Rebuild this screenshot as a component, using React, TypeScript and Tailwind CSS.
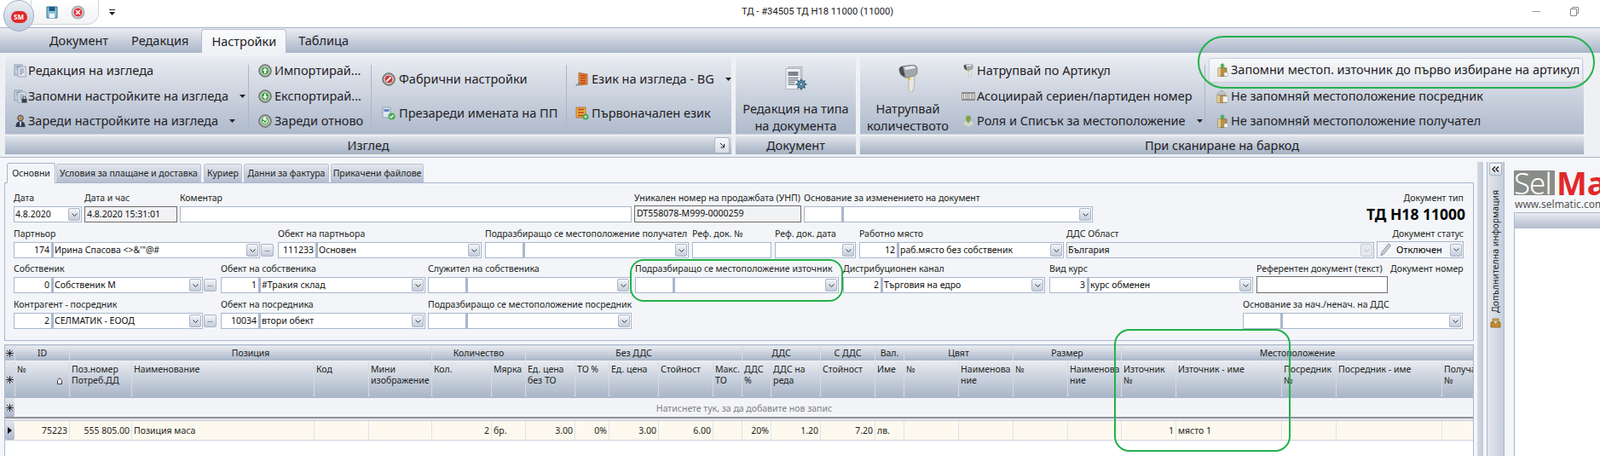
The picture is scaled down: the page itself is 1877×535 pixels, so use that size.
import React from "react";

const F = "[font-family:'Liberation_Sans',Arial,sans-serif]";
const FORM = "[font-family:Roboto,'Liberation_Sans',sans-serif] text-[10.5px]";

function Caret({ cls = "" }: { cls?: string }) {
  return <svg width="7" height="4" viewBox="0 0 7 4" className={`shrink-0 ${cls}`}><path d="M0 0h7L3.500 4z" fill="#222" /></svg>;
}

function Scanner({ w, h }: { w: number; h: number }) {
  return (
    <svg width={w} height={h} viewBox="0 0 23 32" className="shrink-0">
      <path d="M11 13l7-2c1.500 6 .5 14-.5 18l-1 3h-3l-1.500-3c0-5 0-11-1-16z" fill="#e9e7dd" stroke="#a7a59c" strokeWidth=".8" />
      <path d="M10.500 15.500l3-1 .5 3-2.500 1z" fill="#e2b93b" />
      <path d="M1 5C1 3 3 2 6 1.500L16 .3c3 0 6 1 6 4v5c0 2-2 3-4 4l-9 2C4 14 1 10 1 5z" fill="#a4a7ab" stroke="#6f7276" strokeWidth=".7" />
      <path d="M7 3l9-1.500c2 0 4 .8 4 2.500l-12 2z" fill="#eceded" />
      <path d="M1 5c0-2 2-3 4-3 1 3 2 8 3 12C4 14 1 10 1 5z" fill="#4b4d50" />
    </svg>
  );
}

function Ico({ kind, s = 16 }: { kind: string; s?: number }) {
  const c = (fill: string, inner: React.ReactNode) => (
    <svg width={s} height={s} viewBox="0 0 16 16" className="shrink-0">
      <circle cx="8" cy="8" r="7.300" fill="#8a9088" stroke="#6d716c" />
      <circle cx="8" cy="8" r="5" fill={fill} stroke="#f1f1f1" strokeWidth="1" />
      {inner}
    </svg>
  );
  if (kind === "up") return c("#45a34a", <path d="M8 4.500 11 8H9v3H7V8H5z" fill="#fff" />);
  if (kind === "down") return c("#45a34a", <path d="M8 11.500 5 8h2V5h2v3h2z" fill="#fff" />);
  if (kind === "reload") return c("#45a34a", <path d="M5.500 8a2.500 2.500 0 1 0 2.500-2.500M8 4v3L6 5.500z" fill="none" stroke="#fff" strokeWidth="1.200" />);
  if (kind === "factory") return c("#c9303a", <path d="M5.500 10.500 10.500 5.500" stroke="#fff" strokeWidth="2" />);
  if (kind === "docs" || kind === "docslock")
    return (
      <svg width={s} height={s} viewBox="0 0 16 16" className="shrink-0">
        <rect x="1" y="1" width="9" height="12" fill="#c5d0df" stroke="#8e9bb0" />
        <rect x="5" y="3" width="9" height="12" fill="#e4e9f1" stroke="#98a6ba" />
        <path d="M3 3.500h5M3 6h1.500M7 6h5M7 8h5M7 10h5M7 12h3" stroke="#7b8ca6" />
        {kind === "docslock" && (
          <g>
            <rect x="9.500" y="11" width="6" height="4.500" fill="#3a3f47" />
            <path d="M11 11V9.500a1.500 1.500 0 0 1 3 0V11" fill="none" stroke="#3a3f47" />
          </g>
        )}
      </svg>
    );
  if (kind === "user")
    return (
      <svg width={s} height={s} viewBox="0 0 16 16" className="shrink-0">
        <circle cx="8" cy="4.500" r="3.300" fill="#b98d6e" stroke="#4a4a4a" />
        <path d="M2.500 15c0-5 2-6.500 5.500-6.500S13.500 10 13.500 15z" fill="#2f3b52" />
        <path d="M7 9h2l-.5 5h-1z" fill="#e8e8e8" />
      </svg>
    );
  if (kind === "reloadnames")
    return (
      <svg width={s} height={s} viewBox="0 0 16 16" className="shrink-0">
        <rect x="1" y="1" width="9" height="12" fill="#dfe6f1" stroke="#93a0b5" />
        <rect x="2.500" y="3" width="6" height="3" fill="#5d8ac9" />
        <circle cx="11.500" cy="11.500" r="4" fill="#4aa84f" />
        <path d="M9.500 11.500 11 13l2.500-3" stroke="#fff" fill="none" strokeWidth="1.200" />
      </svg>
    );
  if (kind === "lang")
    return (
      <svg width={s} height={s} viewBox="0 0 16 16" className="shrink-0">
        <path d="M4 .500 14 2v12L4 15z" fill="#dd8a2e" stroke="#a4521d" strokeWidth=".7" />
        <path d="M6 3.500l6 .5M6 6.500l6 .3M6 9.500l6 .1M6 12.500l6-.2" stroke="#c8342c" strokeWidth="1.300" />
        <path d="M.5 15c2 0 3-1 4-3" stroke="#5b7fb5" fill="none" strokeWidth="1.300" />
      </svg>
    );
  if (kind === "lang2")
    return (
      <svg width={s} height={s} viewBox="0 0 16 16" className="shrink-0">
        <rect x="1" y="1" width="11" height="12" fill="#e8b53a" stroke="#a4521d" strokeWidth=".7" />
        <path d="M3 3.500h7M3 7h7M3 10.500h7" stroke="#c8342c" strokeWidth="1.600" />
        <circle cx="12" cy="12" r="3.500" fill="#4aa84f" />
        <path d="M10.500 12h3M12 10.500v3" stroke="#fff" />
      </svg>
    );
  if (kind === "barcode")
    return (
      <svg width={s} height={s} viewBox="0 0 16 16" className="shrink-0">
        <rect x="0" y="3" width="16" height="10" fill="#8b8b8b" />
        <path d="M1.500 5v6M3.500 5v6M5 5v6M7 5v6M9 5v6M10.500 5v6M12.500 5v6M14.500 5v6" stroke="#eee" />
      </svg>
    );
  if (kind === "pin")
    return (
      <svg width={s} height={s} viewBox="0 0 16 16" className="shrink-0">
        <path d="M0 11l8-5 8 5-8 4.500z" fill="#d3d7ce" stroke="#a6aaa2" strokeWidth=".5" />
        <path d="M8 11C5 7 5 5.500 5 4.500a3 3 0 0 1 6 0C11 5.500 11 7 8 11z" fill="#7fa64a" />
      </svg>
    );
  if (kind === "bag")
    return (
      <svg width={s} height={s} viewBox="0 0 16 16" className="shrink-0">
        <path d="M3 6 8 4.500 13 6v9.500H3z" fill="#b68f48" stroke="#7b5f2b" strokeWidth=".7" />
        <path d="M3 6l3-.8v10.300H3z" fill="#e2c98c" />
        <path d="M8 0l3 3H9.500v3h-3V3H5z" fill="#4aa84f" />
        <rect x="10" y="11" width="4.500" height="4.500" fill="#f3f3f3" stroke="#9a9a9a" strokeWidth=".5" />
      </svg>
    );
  if (kind === "bag2")
    return (
      <svg width={s} height={s} viewBox="0 0 16 16" className="shrink-0">
        <path d="M2 5l5-4 4 3v3H2z" fill="#c3c3c3" stroke="#8d8d8d" strokeWidth=".6" />
        <path d="M2 7h11v8.500H2z" fill="#bb9650" stroke="#7b5f2b" strokeWidth=".6" />
        <path d="M2 7h3v8.500H2z" fill="#e2c98c" />
        <rect x="8.500" y="8" width="6" height="7" fill="#f3f3f3" stroke="#9a9a9a" strokeWidth=".5" />
      </svg>
    );
  return null;
}

function Item({ icon, text, caret, cls = "", gap = "gap-[1px]" }: { icon: string; text: string; caret?: string; cls?: string; gap?: string }) {
  return (
    <div className={`flex items-center text-[14.5px] text-[#1f2226] whitespace-nowrap ${gap} ${cls}`}>
      {icon === "scan" ? <span className="w-[16px] flex justify-center"><Scanner w={12} h={16} /></span> : <Ico kind={icon} />}
      <span>{text}</span>
      {caret && <Caret cls={caret} />}
    </div>
  );
}

function Sep() {
  return <div className="w-px h-[73px] bg-[#aab6c8] mt-[10px] shrink-0" />;
}

function Group({ w, caption, children, launcher }: { w: string; caption: string; children: React.ReactNode; launcher?: boolean }) {
  return (
    <div className={`flex flex-col shrink-0 ${w}`}>
      <div className="h-[93px] flex bg-linear-to-b from-[#e9ecf1] to-[#afbacc] border border-[#f1f3f6] rounded-t-[2px] border-b-[#cdd5e1]">{children}</div>
      <div className="relative mt-[1px] h-[23px] flex items-center justify-center text-[14.5px] text-[#1f2226] bg-linear-to-b from-[#e0e4ea] to-[#a3afc3] border border-[#e9ecf1]">
        {caption}
        {launcher && (
          <div className="absolute right-[2px] top-[1px] w-[18px] h-[19px] rounded-[3px] bg-linear-to-b from-[#f8f9fb] to-[#d6dbe4] border border-[#a9b5c8] flex items-center justify-center">
            <svg width="7" height="7" viewBox="0 0 7 7"><path d="M1 1l4 4M5.500 2v4h-4" stroke="#222" fill="none" /></svg>
          </div>
        )}
      </div>
    </div>
  );
}

function Chev({ disabled }: { disabled?: boolean }) {
  return (
    <span className={`shrink-0 w-[14px] h-[15px] rounded-[2px] border flex items-center justify-center ${disabled ? "border-[#c4ccd8] bg-[#e6e9ee]" : "border-[#a9b5c8] bg-linear-to-b from-[#f3f5f8] to-[#c5cdda]"}`}>
      <svg width="7" height="4" viewBox="0 0 7 4"><path d="M.5.500 3.500 3.500 6.500.500" fill="none" stroke={disabled ? "#aab2bf" : "#30353d"} /></svg>
    </span>
  );
}

function Dots() {
  return (
    <span className="shrink-0 ml-[1px] w-[15px] h-[15px] self-center rounded-[2px] border border-[#a9b5c8] bg-linear-to-b from-[#f3f5f8] to-[#c5cdda] flex items-center justify-center text-[8px] leading-none text-[#333] pb-[3px]">...</span>
  );
}

function Field({ w, label, right, children }: { w: string; label: string; right?: boolean; children?: React.ReactNode }) {
  return (
    <div className={`shrink-0 flex flex-col ${w}`}>
      <div className={`h-[17px] leading-[15px] text-[#1d1f22] whitespace-nowrap ${right ? "text-right" : ""}`}>{label}</div>
      {children}
    </div>
  );
}

function Combo({ num, text, dots, numW = "w-[45px]", disabled }: { num?: string; text?: string; dots?: boolean; numW?: string; disabled?: boolean }) {
  return (
    <div className="flex h-[19px] text-[#111]">
      {numW !== "w-0" && (
        <div className={`shrink-0 ${numW} bg-white border border-[#a9b7cd] text-right pr-[2px] leading-[17px]`}>{num}</div>
      )}
      <div className={`flex-1 min-w-0 flex items-center border border-[#a9b7cd] ${numW !== "w-0" ? "border-l-2" : ""} ${disabled ? "bg-[#f4f5f7]" : "bg-white"} pl-[1px] pr-[1px]`}>
        <span className="flex-1 truncate leading-[17px]">{text}</span>
        <Chev disabled={disabled} />
      </div>
      {dots && <div className="shrink-0 w-[17px] flex items-center"><Dots /></div>}
    </div>
  );
}

function Box({ text, dark, cls = "h-[19px]" }: { text?: string; dark?: boolean; cls?: string }) {
  return (
    <div className={`${cls} text-[#111] pl-[2px] leading-[17px] border ${dark ? "border-[#6e6e6e]" : "border-[#a9b7cd]"} ${dark && text ? "bg-[#f1f2f4]" : "bg-white"}`}>{text}</div>
  );
}

const COLS = "grid grid-cols-[64px_73px_214px_64px_74px_70px_40px_58px_40px_58px_64px_34px_34px_58px_64px_34px_64px_64px_64px_63px_64px_124px_64px_124px_37px]";

const bands: [string, string][] = [
  ["ID", "col-span-1"],
  ["Позиция", "col-span-4"],
  ["Количество", "col-span-2"],
  ["Без ДДС", "col-span-5"],
  ["ДДС", "col-span-2"],
  ["С ДДС", "col-span-1"],
  ["Вал.", "col-span-1"],
  ["Цвят", "col-span-2"],
  ["Размер", "col-span-2"],
  ["Местоположение", "col-span-5"],
];

const heads: string[][] = [
  ["№"], ["Поз.номер", "Потреб.ДД"], ["Наименование"], ["Код"], ["Мини", "изображение"], ["Кол."], ["Мярка"],
  ["Ед. цена", "без ТО"], ["ТО %"], ["Ед. цена"], ["Стойност"], ["Макс.", "ТО"], ["ДДС", "%"], ["ДДС на", "реда"], ["Стойност"],
  ["Име"], ["№"], ["Наименова", "ние"], ["№"], ["Наименова", "ние"], ["Източник", "№"], ["Източник - име"], ["Посредник", "№"], ["Посредник - име"], ["Получа", "№"],
];

const row: [string, boolean][] = [
  ["75223", true], ["555 805.00", true], ["Позиция маса", false], ["", false], ["", false], ["2", true], ["бр.", false],
  ["3.00", true], ["0%", true], ["3.00", true], ["6.00", true], ["", false], ["20%", true], ["1.20", true], ["7.20", true],
  ["лв.", false], ["", false], ["", false], ["", false], ["", false], ["1", true], ["място 1", false], ["", false], ["", false], ["", false],
];

function Star() {
  return (
    <svg width="9" height="9" viewBox="0 0 9 9">
      <path d="M4.500 0v9M0 4.500h9M1.200 1.200l6.600 6.600M7.800 1.200 1.200 7.800" stroke="#333" strokeWidth="1" />
    </svg>
  );
}

function Ind({ cls, children }: { cls: string; children: React.ReactNode }) {
  return (
    <div className={`w-[11px] mr-[1px] shrink-0 rounded-[2px] flex items-center justify-center bg-linear-to-b from-[#e4e7ec] to-[#aab6c9] ${cls}`}>{children}</div>
  );
}

const TAB = "h-[22px] rounded-t-[3px] border border-b-0 border-[#b9c4d5] bg-linear-to-b from-[#e4e7ec] to-[#b3bed0] flex items-center justify-center";
const GREEN = "border-[#22b14c]";

export default function App() {
  return (
    <div className={`relative w-[1877px] h-[535px] overflow-hidden bg-[#f4f6f9] ${F}`}>
      {/* title bar */}
      <div className="relative h-[33px] bg-white border-b border-[#a3b1c8] flex items-center">
        <div className="absolute left-[36px] top-0 w-[80px] h-[29px] border border-t-0 border-[#d4d6da] rounded-br-[14px] bg-linear-to-b from-white to-[#f2f3f5]" />
        <div className="ml-[54px] relative flex items-center gap-[15px] mb-[3px]">
          <svg width="14" height="15" viewBox="0 0 14 15">
            <path d="M1 1h12v13H1z" fill="#8fc0d8" stroke="#2f6f96" />
            <rect x="3.500" y="1" width="7" height="5" fill="#1f5a85" />
            <rect x="4" y="9" width="6" height="5" fill="#f2f6fa" />
          </svg>
          <svg width="17" height="17" viewBox="0 0 17 17">
            <circle cx="8.500" cy="8.500" r="8" fill="#aeb0b2" />
            <circle cx="8.500" cy="8.500" r="5.500" fill="#e0303c" stroke="#eee" />
            <path d="M6 6l5 5M11 6l-5 5" stroke="#fff" strokeWidth="1.500" />
          </svg>
        </div>
        <svg width="7" height="8" viewBox="0 0 7 8" className="ml-[28px] mb-[3px] relative">
          <path d="M0 0h7v1H0zM0 3h7L3.500 7z" fill="#222" />
        </svg>
        <div className="absolute left-[870px] top-[6px] text-[11.2px] [font-family:Roboto,sans-serif] whitespace-nowrap text-[#1a1a1a]">ТД - #34505 ТД Н18 11000 (11000)</div>
        <div className="absolute left-[1797px] top-[13px] w-[10px] h-px bg-[#999]" />
        <svg width="10" height="11" viewBox="0 0 10 11" className="absolute left-[1842px] top-[8px]">
          <path d="M2.500 2.500V.500h7v7h-2M.500 2.500h7v8h-7z" fill="#fff" stroke="#888" />
        </svg>
      </div>
      {/* menu tabs */}
      <div className="h-[29px] pl-[58px] flex items-center bg-linear-to-b from-[#ecedf1] to-[#a9b5c8] text-[14.5px] text-[#1f2226]">
        <span>Документ</span>
        <span className="ml-[27px]">Редакция</span>
        <div className="ml-[15px] h-[28px] mt-[1px] w-[100px] rounded-t-[4px] border border-b-0 border-[#b2bfd2] bg-linear-to-b from-[#fafbfc] to-[#eef1f5] flex items-center justify-center">Настройки</div>
        <span className="ml-[14px]">Таблица</span>
      </div>
      {/* ribbon */}
      <div className="h-[123px] bg-[#eef0f4] border-b border-[#a9b7cd] pt-[3px] pl-[5px] flex gap-[3px] overflow-hidden">
        <Group w="w-[854px]" caption="Изглед" launcher>
          <div className="w-[285px] pl-[10px] flex flex-col pt-[2px] shrink-0">
            <Item icon="docs" text="Редакция на изгледа" cls="h-[30px]" />
            <Item icon="docslock" text="Запомни настройките на изгледа" caret="ml-[12px]" cls="h-[30px]" />
            <Item icon="user" text="Зареди настройките на изгледа" caret="ml-[12px]" cls="h-[30px]" />
          </div>
          <Sep />
          <div className="w-[143px] pl-[11px] flex flex-col pt-[2px] shrink-0">
            <Item icon="up" text="Импортирай..." gap="gap-[3px]" cls="h-[30px]" />
            <Item icon="down" text="Експортирай..." gap="gap-[3px]" cls="h-[30px]" />
            <Item icon="reload" text="Зареди отново" gap="gap-[3px]" cls="h-[30px]" />
          </div>
          <Sep />
          <div className="w-[228px] pl-[12px] flex flex-col pt-[7px] shrink-0">
            <Item icon="factory" text="Фабрични настройки" gap="gap-[4px]" cls="h-[40px]" />
            <Item icon="reloadnames" text="Презареди имената на ПП" gap="gap-[4px]" cls="h-[40px]" />
          </div>
          <Sep />
          <div className="flex-1 pl-[10px] flex flex-col pt-[7px]">
            <Item icon="lang" text="Език на изгледа - BG" gap="gap-[3px]" caret="ml-[10px]" cls="h-[40px]" />
            <Item icon="lang2" text="Първоначален език" gap="gap-[3px]" cls="h-[40px]" />
          </div>
        </Group>
        <Group w="w-[143px]" caption="Документ">
          <div className="w-full flex flex-col items-center">
            <svg width="26" height="29" viewBox="0 0 26 29" className="mt-[12px] shrink-0">
              <rect x="4" y="0.500" width="16" height="22" fill="#d5d8dd" stroke="#adb2b9" />
              <rect x="1" y="2.500" width="17" height="24" fill="#f2f3f5" stroke="#aeb3ba" />
              <rect x="3.500" y="6" width="12" height="5" fill="#7c8591" />
              <path d="M3.500 13.500h12M3.500 16h12M3.500 18.500h8M3.500 21h8" stroke="#7c8591" strokeWidth="1.300" />
              <circle cx="19" cy="21" r="4.500" fill="#5d8fb0" stroke="#2e5b78" />
              <circle cx="19" cy="21" r="1.800" fill="#dfe8ee" stroke="#2e5b78" />
              <path d="M19 14.500v2M19 25.500v2M12.500 21h2M23.500 21h2M14.500 16.500l1.500 1.500M22 24l1.500 1.500M23.500 16.500 22 18M16 24l-1.500 1.500" stroke="#2e5b78" strokeWidth="1.600" />
            </svg>
            <div className="mt-auto text-[14.5px] text-[#1f2226] text-center leading-[20px] whitespace-nowrap">Редакция на типа<br />на документа</div>
          </div>
        </Group>
        <Group w="w-[851px]" caption="При сканиране на баркод">
          <div className="w-[112px] flex flex-col items-center shrink-0">
            <div className="mt-[10px]"><Scanner w={23} h={32} /></div>
            <div className="mt-auto text-[14.5px] text-[#1f2226] text-center leading-[20px] whitespace-nowrap">Натрупвай<br />количеството</div>
          </div>
          <div className="w-[292px] pl-[7px] flex flex-col pt-[2px] shrink-0">
            <Item icon="scan" text="Натрупвай по Артикул" cls="h-[30px]" gap="gap-[2px]" />
            <Item icon="barcode" text="Асоциирай сериен/партиден номер" cls="h-[30px]" gap="gap-[2px]" />
            <Item icon="pin" text="Роля и Списък за местоположение" caret="ml-[11px]" cls="h-[30px]" gap="gap-[2px]" />
          </div>
          <Sep />
          <div className="flex-1 pl-[4px] flex flex-col pt-[2px] pr-[1px]">
            <Item icon="bag" text="Запомни местоп. източник до първо избиране на артикул" cls="h-[29px] pl-[7px] mb-[1px] rounded-[3px] border border-[#c6cfdc] bg-linear-to-b from-[#f7f8fa] to-[#e6e9ef]" gap="gap-[2px]" />
            <Item icon="bag2" text="Не запомняй местоположение посредник" cls="h-[30px] pl-[8px]" gap="gap-[2px]" />
            <Item icon="bag" text="Не запомняй местоположение получател" cls="h-[30px] pl-[8px]" gap="gap-[2px]" />
          </div>
        </Group>
      </div>

      {/* body */}
      <div className="flex h-[350px]">
        <div className={`w-[1729px] pl-[5px] pt-[5px] shrink-0 flex flex-col ${FORM}`}>
          {/* inner tabs */}
          <div className="h-[24px] flex items-end pl-[3px] gap-[1px] text-[#1d1f22] whitespace-nowrap">
            <div className="h-[24px] w-[57px] rounded-t-[3px] border border-b-0 border-[#a9b7cd] bg-[#f4f6f9] flex items-center justify-center relative top-px">Основни</div>
            <div className={`${TAB} w-[170px]`}>Условия за плащане и доставка</div>
            <div className={`${TAB} w-[45px] ml-[2px]`}>Куриер</div>
            <div className={`${TAB} w-[100px] ml-[1px]`}>Данни за фактура</div>
            <div className={`${TAB} w-[109px] ml-[1px]`}>Прикачени файлове</div>
          </div>
          {/* form */}
          <div className="h-[186px] border border-[#a9b7cd] bg-[#f3f5f8] pl-[10px] pt-[10px] shrink-0">
            <div className="flex gap-[3px] h-[36px]">
              <Field w="w-[80px]" label="Дата"><Combo numW="w-0" text="4.8.2020" /></Field>
              <Field w="w-[109px]" label="Дата и час"><Box text="4.8.2020 15:31:01" dark /></Field>
              <Field w="w-[530px]" label="Коментар"><Box /></Field>
              <Field w="w-[196px]" label="Уникален номер на продажбата (УНП)"><Box text="DT558078-M999-0000259" dark cls="h-[21px]" /></Field>
              <Field w="w-[339px]" label="Основание за изменението на документ"><Combo /></Field>
              <div className="w-[434px] flex flex-col items-end text-right">
                <div className="h-[17px] leading-[15px] text-[#1d1f22] pr-[2px]">Документ тип</div>
                <div className="font-bold text-[17.5px] leading-[20px] text-black [font-family:'Liberation_Serif',serif]">ТД Н18 11000</div>
              </div>
            </div>
            <div className="flex mt-[6px] h-[36px]">
              <Field w="w-[306px] mr-[4px]" label="Партньор"><Combo num="174" text={'Ирина Спасова <>&\'"@#'} dots /></Field>
              <Field w="w-[239px] mr-[4px]" label="Обект на партньора"><Combo num="111233" text="Основен" /></Field>
              <Field w="w-[239px] mr-[4px]" label="Подразбиращо се местоположение получател"><Combo /></Field>
              <Field w="w-[93px] mr-[4px]" label="Реф. док. №"><Box /></Field>
              <Field w="w-[95px] mr-[4px]" label="Реф. док. дата"><Combo numW="w-0" /></Field>
              <Field w="w-[240px] mr-[3px]" label="Работно място"><Combo num="12" text="раб.място без собственик" /></Field>
              <Field w="w-[361px] mr-[3px]" label="ДДС Област"><Combo numW="w-0" text="България" disabled /></Field>
              <Field w="w-[102px]" label="Документ статус" right>
                <div className="flex h-[21px] items-center border border-[#a9b7cd] bg-[#f4f6f9] pr-[1px] pl-[3px]">
                  <svg width="14" height="16" viewBox="0 0 14 16" className="shrink-0"><path d="M1 15 2 11 10 1l2.500 2L4.500 13z" fill="#c9ced5" stroke="#7d838b" strokeWidth=".8" /></svg>
                  <span className="flex-1 pl-[5px] text-[11px]">Отключен</span>
                  <Chev />
                </div>
              </Field>
            </div>
            <div className="flex mt-[5px] h-[36px]">
              <Field w="w-[239px] mr-[4px]" label="Собственик"><Combo num="0" text="Собственик М" dots /></Field>
              <Field w="w-[240px] mr-[3px]" label="Обект на собственика"><Combo num="1" text="#Тракия склад" /></Field>
              <Field w="w-[238px] mr-[5px]" label="Служител на собственика"><Combo /></Field>
              <Field w="w-[239px] mr-[5px]" label="Подразбиращо се местоположение източник"><Combo /></Field>
              <Field w="w-[237px] mr-[5px]" label="Дистрибуционен канал"><Combo num="2" text="Търговия на едро" /></Field>
              <Field w="w-[239px] mr-[4px]" label="Вид курс"><Combo num="3" text="курс обменен" /></Field>
              <Field w="w-[154px] mr-[3px]" label="Референтен документ (текст)"><Box dark cls="h-[21px]" /></Field>
              <Field w="w-[86px]" label="Документ номер" />
            </div>
            <div className="flex mt-[6px] h-[36px]">
              <Field w="w-[239px] mr-[4px]" label="Контрагент - посредник"><Combo num="2" text="СЕЛМАТИК - ЕООД" dots /></Field>
              <Field w="w-[240px] mr-[3px]" label="Обект на посредника"><Combo num="10034" text="втори обект" /></Field>
              <Field w="w-[239px] mr-[717px]" label="Подразбиращо се местоположение посредник"><Combo /></Field>
              <Field w="w-[258px]" label="Основание за нач./ненач. на ДДС"><Combo /></Field>
            </div>
          </div>
          {/* grid */}
          <div className="mt-[4px] flex-1 min-h-0 border-t border-x border-[#a9b7cd] bg-white overflow-hidden text-[#1d1f22]">
            <div className="flex h-[19px] pt-[1px] bg-[#d5dbe5] border-b border-[#f0f2f5]">
              <Ind cls="h-[17px]"><Star /></Ind>
              <div className={`${COLS} flex-1 min-w-0 h-[17px]`}>
                {bands.map(([t, c]) => (
                  <div key={t} className={`${c} mr-[1px] rounded-t-[2px] bg-linear-to-b from-[#e8ebf0] to-[#aab6c9] text-center leading-[17px] whitespace-nowrap`}>{t}</div>
                ))}
              </div>
            </div>
            <div className="flex h-[43px] border-b-2 border-[#a9b7cd] bg-[#d5dbe5]">
              <Ind cls="h-[42px]"><Star /></Ind>
              <div className={`${COLS} flex-1 min-w-0 overflow-hidden`}>
                {heads.map((h, i) => (
                  <div key={i} className="relative mr-[1px] rounded-b-[2px] bg-linear-to-b from-[#e8ebf0] to-[#aab6c9] pl-[2px] pt-[3px] leading-[13px] whitespace-nowrap">
                    {h[0]}
                    {h[1] && <br />}
                    {h[1]}
                    {i === 0 && (
                      <svg width="6" height="8" viewBox="0 0 6 8" className="absolute right-[8px] top-[19px]"><path d="M.5 3.500 3 .500l2.500 3V7.500h-5z" fill="#fff" stroke="#111" strokeWidth=".8" /></svg>
                    )}
                  </div>
                ))}
              </div>
            </div>
            <div className="flex h-[24px] bg-[#f3f4f7] border-b-2 border-[#8e9298]">
              <Ind cls="h-[22px]"><Star /></Ind>
              <div className="flex-1 text-center text-[#7d7f83] leading-[24px]">Натиснете тук, за да добавите нов запис</div>
            </div>
            <div className="h-[3px] bg-[#e7eaef] border-b border-[#c9d0dc]" />
            <div className="flex h-[23px] border-b border-[#ccd4e1] bg-[#fdf9ef]">
              <Ind cls="h-[22px]">
                <svg width="5" height="8" viewBox="0 0 5 8"><path d="M0 0l5 4-5 4z" fill="#111" /></svg>
              </Ind>
              <div className={`${COLS} flex-1 min-w-0`}>
                {row.map(([t, r], i) => (
                  <div key={i} className={`border-r border-[#dfe3ea] px-[2px] leading-[22px] whitespace-nowrap ${r ? "text-right" : ""}`}>{t}</div>
                ))}
              </div>
            </div>
          </div>
        </div>
        {/* splitter */}
        <div className="ml-[4px] w-[7px] mt-[5px] bg-linear-to-r from-[#d4dae4] to-[#c2cbd9] shrink-0" />
        <div className="ml-[4px] w-[21px] mt-[5px] border-x border-[#a9b7cd] bg-linear-to-r from-[#e3e7ed] to-[#c5cedb] shrink-0 flex flex-col items-center">
          <div className="mt-[1px] w-[15px] h-[15px] rounded-[2px] border border-[#a9b5c8] bg-linear-to-b from-[#f8f9fb] to-[#d3d9e3] flex items-center justify-center">
            <svg width="9" height="7" viewBox="0 0 9 7"><path d="M4 .5 1 3.500l3 3M8 .5 5 3.500l3 3" fill="none" stroke="#111" strokeWidth="1.200" /></svg>
          </div>
          <div className={`mt-[17px] text-[#1d1f22] whitespace-nowrap [writing-mode:vertical-rl] rotate-180 ${FORM}`}>Допълнителна информация</div>
          <svg width="13" height="13" viewBox="0 0 13 13" className="mt-[5px]">
            <path d="M1 6h11v6H1z" fill="#c98a2c" stroke="#7a5418" strokeWidth=".7" />
            <path d="M3 6V2h7v4" fill="#e0b65c" stroke="#7a5418" strokeWidth=".7" />
            <circle cx="6.500" cy="6" r="2" fill="#e8e2d0" stroke="#7a5418" strokeWidth=".6" />
          </svg>
        </div>
        <div className="flex-1 min-w-0 bg-[#f4f6f9] pl-[11px] mt-[5px] overflow-hidden">
          <div className="w-[160px] mt-[10px] flex h-[29px] items-end overflow-hidden">
            <div className="w-[48px] h-[29px] bg-[#898c88] text-white text-[35px] leading-[29px] tracking-[-1px] font-light overflow-hidden shrink-0">Sel</div>
            <div className="ml-[2px] h-[29px] text-[#e2272a] font-bold text-[38px] leading-[29px]">Mat</div>
          </div>
          <div className="text-[12px] leading-[14px] mt-[4px] text-[#555] whitespace-nowrap pl-[1px]">www.selmatic.com</div>
          <div className="mt-[2px] h-[310px] w-[200px] border-l border-t border-[#a9b7cd] bg-white">
            <div className="h-[18px] bg-linear-to-b from-[#e8ebf0] to-[#b0bbcd] rounded-tl-[3px]" />
          </div>
        </div>
      </div>

      {/* quick-access round button */}
      <div className="absolute left-[4px] top-0 w-[36px] h-[37px] rounded-full border border-[#9fb0c8] bg-linear-to-b from-[#eef1f5] to-[#bcc8d9] flex items-center justify-center">
        <div className="w-[19px] h-[14px] mt-[2px] rounded-full bg-[#df2a2a] text-white text-[8px] font-bold flex items-center justify-center">SM</div>
      </div>

      {/* green annotations */}
      <div className={`absolute left-[1405px] top-[42px] w-[466px] h-[62px] rounded-[31px] border-2 ${GREEN}`} />
      <div className={`absolute left-[739px] top-[304px] w-[250px] h-[50px] rounded-[16px] border-2 ${GREEN}`} />
      <div className={`absolute left-[1307px] top-[386px] w-[207px] h-[144px] rounded-[18px] border-2 ${GREEN}`} />
    </div>
  );
}
